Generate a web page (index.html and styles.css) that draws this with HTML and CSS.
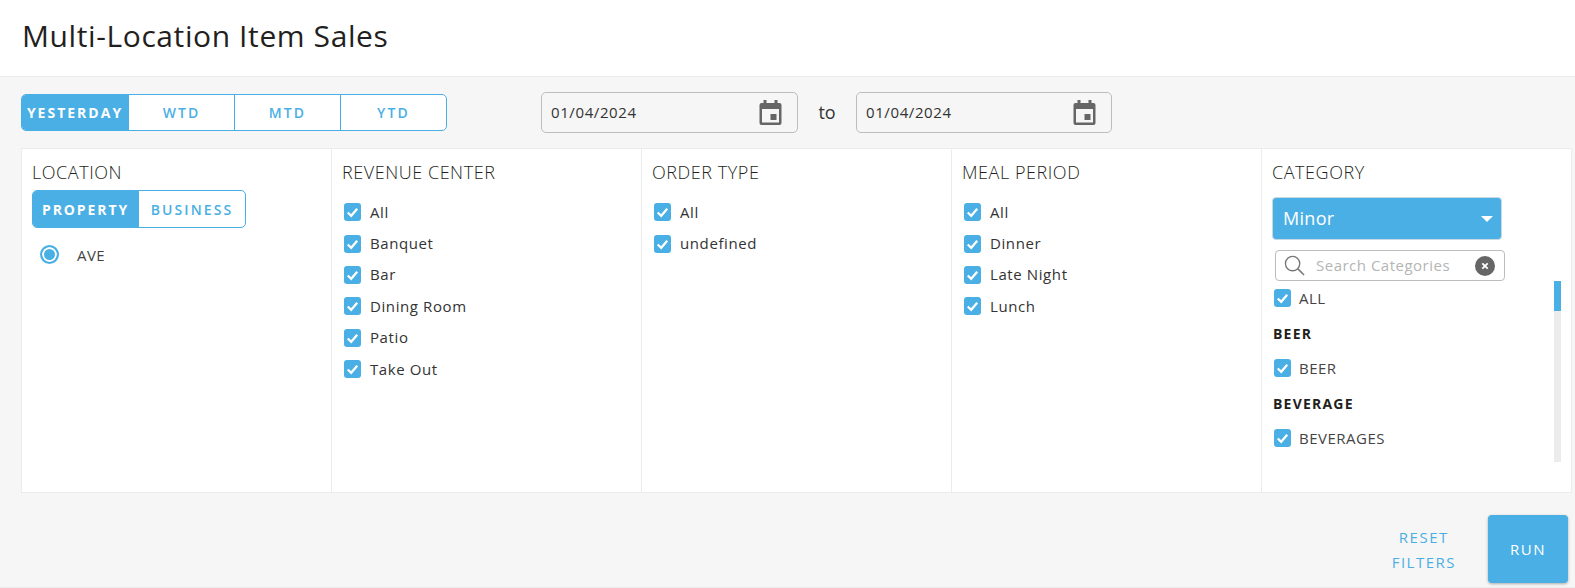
FILE: index.html
```html
<!DOCTYPE html>
<html lang="en">
<head>
<meta charset="utf-8">
<title>Multi-Location Item Sales</title>
<link rel="stylesheet" href="styles.css">
</head>
<body>
<svg class="defs" width="0" height="0" aria-hidden="true">
  <symbol id="chk" viewBox="0 0 18 18"><path d="M4 9.500 7.600 13 14 5.500" fill="none" stroke="#fff" stroke-width="2.400"/></symbol>
  <symbol id="cal" viewBox="0 0 22 25"><path d="M4 0h3v3h8V0h3v3h2a2 2 0 0 1 2 2v18a2 2 0 0 1-2 2H2a2 2 0 0 1-2-2V5a2 2 0 0 1 2-2h2zM2.500 9v13.500h17V9z" fill="#666" fill-rule="evenodd"/><rect x="11" y="14" width="6" height="6" fill="#666"/></symbol>
</svg>
<header class="page-head"><h1>Multi-Location Item Sales</h1></header>
<main class="content">
  <div class="toolbar">
    <div class="seg seg-range">
      <button class="on">YESTERDAY</button><button>WTD</button><button>MTD</button><button>YTD</button>
    </div>
    <div class="dates">
      <div class="date"><span>01/04/2024</span><svg class="cal"><use href="#cal"/></svg></div>
      <span class="to">to</span>
      <div class="date"><span>01/04/2024</span><svg class="cal"><use href="#cal"/></svg></div>
    </div>
  </div>
  <section class="panel">
    <div class="col">
      <h2>LOCATION</h2>
      <div class="seg seg-loc"><button class="on">PROPERTY</button><button>BUSINESS</button></div>
      <div class="radio-row"><span class="radio"></span><span>AVE</span></div>
    </div>
    <div class="col">
      <h2>REVENUE CENTER</h2>
      <ul class="checks">
        <li><svg class="box"><use href="#chk"/></svg>All</li>
        <li><svg class="box"><use href="#chk"/></svg>Banquet</li>
        <li><svg class="box"><use href="#chk"/></svg>Bar</li>
        <li><svg class="box"><use href="#chk"/></svg>Dining Room</li>
        <li><svg class="box"><use href="#chk"/></svg>Patio</li>
        <li><svg class="box"><use href="#chk"/></svg>Take Out</li>
      </ul>
    </div>
    <div class="col">
      <h2>ORDER TYPE</h2>
      <ul class="checks">
        <li><svg class="box"><use href="#chk"/></svg>All</li>
        <li><svg class="box"><use href="#chk"/></svg>undefined</li>
      </ul>
    </div>
    <div class="col">
      <h2>MEAL PERIOD</h2>
      <ul class="checks">
        <li><svg class="box"><use href="#chk"/></svg>All</li>
        <li><svg class="box"><use href="#chk"/></svg>Dinner</li>
        <li><svg class="box"><use href="#chk"/></svg>Late Night</li>
        <li><svg class="box"><use href="#chk"/></svg>Lunch</li>
      </ul>
    </div>
    <div class="col col-cat">
      <h2>CATEGORY</h2>
      <div class="select"><span>Minor</span><i class="caret"></i></div>
      <div class="search">
        <svg class="mag" viewBox="0 0 22 22"><circle cx="9" cy="9" r="7.500" fill="none" stroke="#777" stroke-width="1.400"/><path d="M14.500 14.500 21 21" stroke="#777" stroke-width="1.600"/></svg>
        <span class="ph">Search Categories</span>
        <svg class="clear" viewBox="0 0 20 20"><circle cx="10" cy="10" r="10" fill="#666"/><path d="M7.300 7.300l5.400 5.400M12.700 7.300l-5.400 5.400" stroke="#fff" stroke-width="1.800"/></svg>
      </div>
      <div class="cat-list">
        <div class="cat-item"><svg class="box"><use href="#chk"/></svg>ALL</div>
        <div class="cat-head">BEER</div>
        <div class="cat-item"><svg class="box"><use href="#chk"/></svg>BEER</div>
        <div class="cat-head">BEVERAGE</div>
        <div class="cat-item"><svg class="box"><use href="#chk"/></svg>BEVERAGES</div>
        <div class="track"><div class="thumb"></div></div>
      </div>
    </div>
  </section>
  <div class="actions">
    <button class="reset">RESET<br>FILTERS</button>
    <button class="run">RUN</button>
  </div>
</main>
</body>
</html>
```
FILE: styles.css
```css
* { box-sizing: border-box; }
html, body { margin: 0; height: 100%; }
body {
  font-family: "Open Sans", sans-serif;
  color: #231f20;
  background: #f6f6f6;
  overflow: hidden;
}
.defs { position: absolute; }
button { font-family: inherit; cursor: pointer; }
.page-head {
  height: 77px;
  background: #fff;
  border-bottom: 1px solid #ececec;
  padding: 14px 0 0 22px;
}
h1 { margin: 0; font-size: 30px; line-height: 44px; font-weight: 400; letter-spacing: 0.6px; }
.content { height: 511px; padding: 17px 3px 0 21px; border-bottom: 1px solid #ececec; }
.toolbar { display: flex; height: 54px; }
.seg { display: flex; border: 1px solid #4aafe4; border-radius: 5px; background: #fff; overflow: hidden; }
.seg button {
  border: 0;
  border-left: 1px solid #4aafe4;
  background: transparent;
  color: #4aafe4;
  padding: 0;
  font-weight: 600;
  letter-spacing: 2.1px;
  font-size: 14px;
}
.seg button:first-child { border-left: 0; }
.seg .on { background: #4aafe4; color: #fff; font-weight: 700; }
.seg-range { width: 426px; height: 37px; }
.seg-range button { flex: 1; }
.seg-range .on { flex: none; width: 106px; letter-spacing: 2px; }
.seg-loc .on { letter-spacing: 1.9px; }
.dates { display: flex; align-items: flex-start; margin-left: 94px; margin-top: -2px; }
.date {
  width: 257px; height: 41px;
  border: 1px solid #bdbdbd; border-radius: 5px;
  display: flex; align-items: center; justify-content: space-between;
  padding: 0 15px 2px 9px;
  font-size: 15px; letter-spacing: 0.6px; color: #333;
}
.date + .to + .date { width: 256px; }
.cal { width: 23px; height: 25px; margin-top: 2px; }
.to { width: 58px; text-align: center; font-size: 18px; line-height: 41px; color: #333; }
.panel {
  display: grid; grid-template-columns: 309px 310px 310px 310px 1fr;
  height: 345px;
  background: #fff;
  border: 1px solid #ececec;
}
.col { border-left: 1px solid #ececec; padding: 11px 10px 0; min-width: 0; }
.col:first-child { border-left: 0; }
h2 { margin: 0; font-size: 18px; line-height: 25px; font-weight: 300; letter-spacing: 0.55px; }
.seg-loc { width: 214px; height: 38px; margin-top: 5px; }
.seg-loc button { flex: 1; }
.seg-loc .on { flex: none; width: 105px; }
.radio-row { display: flex; align-items: center; gap: 18px; margin: 10px 0 0 8px; font-size: 15px; letter-spacing: 0.4px; color: #444; height: 38px; padding-bottom: 5px; }
.radio {
  width: 19px; height: 19px; border-radius: 50%;
  border: 2px solid #4aafe4; background: #4aafe4; box-shadow: inset 0 0 0 2px #fff;
}
.checks { list-style: none; margin: 11px 0 0; padding: 0; }
.checks li {
  display: flex; align-items: center; height: 31.4px;
  font-size: 15px; letter-spacing: 0.6px; color: #333;
}
.box {
  width: 17px; height: 18px; flex: none; margin: 1px 9px 0 2px;
  background: #4aafe4; border-radius: 3px;
}
.select {
  width: 230px; height: 43px; margin-top: 12px;
  background: #4aafe4; border: 1px solid #c9d9e3; border-radius: 4px;
  color: #fff; font-size: 18px; letter-spacing: 0.3px;
  display: flex; align-items: center; justify-content: space-between;
  padding: 0 8px 2px 10px;
}
.caret { width: 0; height: 0; border: 6px solid transparent; border-top: 6px solid #fff; border-bottom: 0; margin-top: 2px; }
.search {
  width: 230px; height: 31px; margin: 10px 0 0 3px;
  border: 1px solid #bdbdbd; border-radius: 4px;
  display: flex; align-items: center; padding: 0 9px 0 8px;
  font-size: 15px; letter-spacing: 0.5px; color: #b5b5b5;
}
.mag { width: 21px; height: 21px; flex: none; }
.ph { flex: 1; margin: 0 0 2px 11px; white-space: nowrap; }
.clear { width: 20px; height: 20px; flex: none; }
.cat-list { position: relative; height: 181px; padding-top: 4px; }
.cat-item { display: flex; align-items: center; height: 26px; font-size: 15px; letter-spacing: 0.5px; color: #444; }
.cat-item .box { margin: 0 8px 0 2px; }
.cat-head { height: 44px; padding: 13px 0 0 1px; font-size: 14px; font-weight: 700; letter-spacing: 1.2px; line-height: 20px; }
.track { position: absolute; top: 0; right: 0; width: 7px; height: 181px; background: #ececec; }
.thumb { height: 30px; background: #4aafe4; }
.actions { display: flex; justify-content: flex-end; align-items: flex-start; margin: 22px 4px 0 0; }
.reset {
  border: 0; background: none; padding: 0; margin: 10px 32px 0 0;
  color: #4aafe4; font-size: 15px; line-height: 25px; letter-spacing: 1.5px;
}
.run {
  width: 80px; height: 68px;
  border: 0; border-radius: 4px;
  background: #4aafe4; color: #fff;
  font-size: 15px; letter-spacing: 1.5px; font-weight: 400;
  box-shadow: 0 1px 3px rgba(0,0,0,.3);
}
```
